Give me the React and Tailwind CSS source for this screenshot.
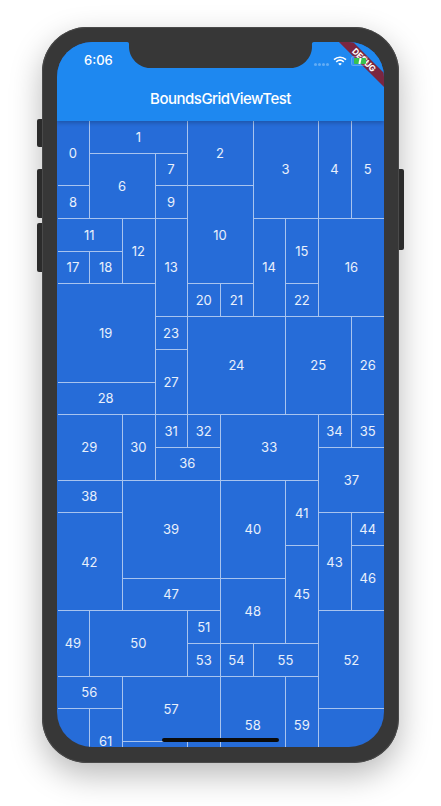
import React from 'react';

// [col, row, colSpan, rowSpan]
const tiles = [
  [0, 0, 1, 2], [1, 0, 3, 1], [4, 0, 2, 2], [6, 0, 2, 3], [8, 0, 1, 3], [9, 0, 1, 3],
  [1, 1, 2, 2], [3, 1, 1, 1], [0, 2, 1, 1], [3, 2, 1, 1], [4, 2, 2, 3], [0, 3, 2, 1],
  [2, 3, 1, 2], [3, 3, 1, 3], [6, 3, 1, 3], [7, 3, 1, 2], [8, 3, 2, 3], [0, 4, 1, 1],
  [1, 4, 1, 1], [0, 5, 3, 3], [4, 5, 1, 1], [5, 5, 1, 1], [7, 5, 1, 1], [3, 6, 1, 1],
  [4, 6, 3, 3], [7, 6, 2, 3], [9, 6, 1, 3], [3, 7, 1, 2], [0, 8, 3, 1], [0, 9, 2, 2],
  [2, 9, 1, 2], [3, 9, 1, 1], [4, 9, 1, 1], [5, 9, 3, 2], [8, 9, 1, 1], [9, 9, 1, 1],
  [3, 10, 2, 1], [8, 10, 2, 2], [0, 11, 2, 1], [2, 11, 3, 3], [5, 11, 2, 3], [7, 11, 1, 2],
  [0, 12, 2, 3], [8, 12, 1, 3], [9, 12, 1, 1], [7, 13, 1, 3], [9, 13, 1, 2], [2, 14, 3, 1],
  [5, 14, 2, 2], [0, 15, 1, 2], [1, 15, 3, 2], [4, 15, 1, 1], [8, 15, 2, 3], [4, 16, 1, 1],
  [5, 16, 1, 1], [6, 16, 2, 1], [0, 17, 2, 1], [2, 17, 3, 2], [5, 17, 2, 3], [7, 17, 1, 3],
  [0, 18, 1, 3], [1, 18, 1, 2], [8, 18, 2, 3], [2, 19, 2, 2], [4, 19, 1, 2],
];

function Wifi() {
  return (
    <svg width="14" height="10" viewBox="0 0 14 10" fill="none" stroke="white" strokeWidth="1.6">
      <path d="M1 3.6C4.4 .5 9.6 .5 13 3.6" />
      <path d="M3.2 5.8C5.4 3.9 8.6 3.9 10.8 5.8" />
      <path d="M7 9.6L5.2 7.7C6.2 6.9 7.8 6.9 8.8 7.7Z" fill="white" stroke="none" />
    </svg>
  );
}

function Battery() {
  return (
    <div className="flex items-center">
      <div className="flex h-[10px] w-[17px] items-center justify-end rounded-[2.5px] border border-white/20 bg-white/10 p-[1px]">
        <div className="flex h-full w-[12px] items-center justify-center rounded-[1px] bg-[#37c24f]">
          <span className="h-[6px] w-[2px] rotate-12 bg-white" />
        </div>
      </div>
      <div className="h-[3px] w-[1px] bg-white/30" />
    </div>
  );
}

export default function App() {
  return (
    <div className="h-[806px] w-[441px] overflow-hidden bg-white pl-[42px] pt-[27px]">
      <div className="relative h-[736px] w-[357px] rounded-[45px] bg-[#373737] p-[15px] shadow-[inset_0_0_0_1px_#4a4a4a,0_12px_32px_rgba(0,0,0,0.28)]">
        {/* side buttons */}
        <div className="absolute left-[-5px] top-[92px] h-[28px] w-[5px] rounded-l-[2px] bg-[#2b2b2b]" />
        <div className="absolute left-[-5px] top-[142px] h-[49px] w-[5px] rounded-l-[2px] bg-[#2b2b2b]" />
        <div className="absolute left-[-5px] top-[196px] h-[49px] w-[5px] rounded-l-[2px] bg-[#2b2b2b]" />
        <div className="absolute right-[-5px] top-[142px] h-[81px] w-[5px] rounded-r-[2px] bg-[#2b2b2b]" />

        <div className="relative h-[705px] w-[327px] overflow-hidden rounded-[35px] bg-[#266cd8] font-['Inter',sans-serif] text-white">
          {/* app bar */}
          <div className="relative z-10 flex h-[79px] flex-col bg-[#1e88f0] shadow-[0_2px_4px_rgba(0,0,0,0.22)]">
            <div className="flex h-[38px] items-center pl-[27px]">
              <span className="text-[13px] font-medium">6:06</span>
            </div>
            <div className="flex h-[38px] items-center justify-center text-[15px] font-medium tracking-[-0.5px]">
              BoundsGridViewTest
            </div>
          </div>

          {/* tiles */}
          <div className="ml-[0.6px] grid w-[327px] grid-cols-10 auto-rows-[32.7px]">
            {tiles.map(([c, r, cs, rs], i) => (
              <div
                key={i}
                className={`flex items-center justify-center border-b border-white/60 pr-[1px] pt-[1px] text-[13px] text-white/90 ${c + cs === 10 ? '' : 'border-r'}`}
                style={{ gridColumn: `${c + 1} / span ${cs}`, gridRow: `${r + 1} / span ${rs}` }}
              >
                {i < 62 && i !== 60 ? i : ''}
              </div>
            ))}
          </div>

          {/* debug banner */}
          <div className="absolute right-[-35px] top-[13px] z-20 flex h-[10px] w-[110px] rotate-45 items-center justify-center bg-[#7a2640] text-[8.5px] font-bold">
            DEBUG
          </div>

          {/* status icons sit on top of the banner */}
          <div className="absolute right-[15px] top-[14px] z-30 flex items-center">
            <div className="mr-[4px] mt-[6px] flex gap-[1px]">
              <span className="h-[3px] w-[3px] rounded-full bg-white/30" />
              <span className="h-[3px] w-[3px] rounded-full bg-white/30" />
              <span className="h-[3px] w-[3px] rounded-full bg-white/30" />
              <span className="h-[3px] w-[3px] rounded-full bg-white/30" />
            </div>
            <div className="mr-[4px]">
              <Wifi />
            </div>
            <Battery />
          </div>

          {/* home indicator */}
          <div className="absolute bottom-[5px] left-[105px] z-30 h-[4px] w-[117px] rounded-full bg-[#0b0b0b]" />

          {/* notch */}
          <svg className="absolute left-[70px] top-0 z-30" width="187" height="26" viewBox="0 0 187 26" fill="#373737">
            <path d="M0 0H187C184.5 0 185 2 185 5C185 16 175 26 164 26H23C12 26 2 16 2 5C2 2 2.5 0 0 0Z" />
          </svg>
        </div>
      </div>
    </div>
  );
}
